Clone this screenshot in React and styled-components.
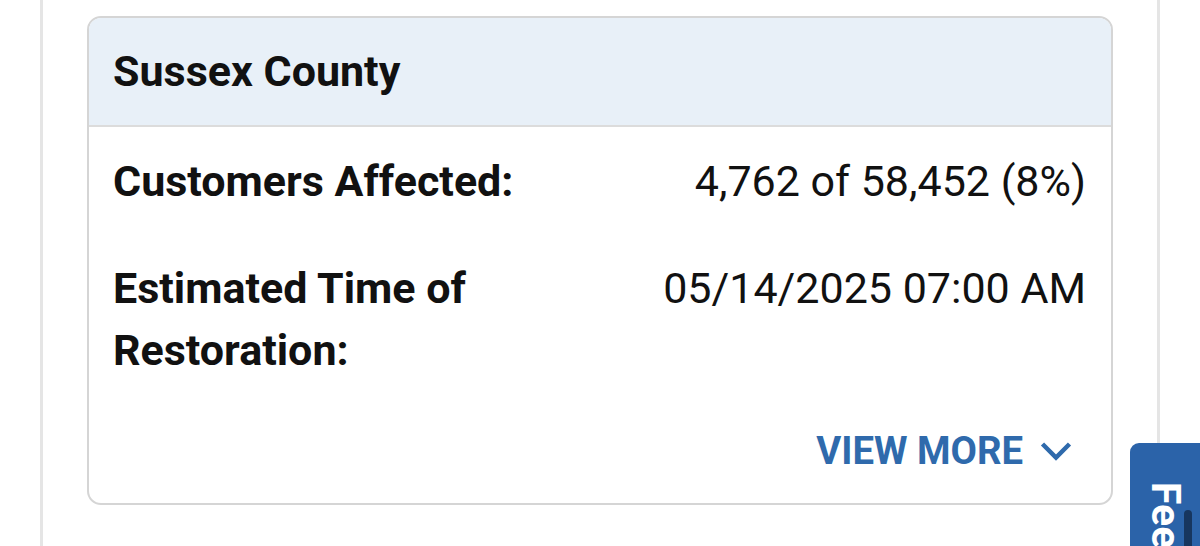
import styled, { createGlobalStyle } from "styled-components";

const GlobalStyle = createGlobalStyle`
  html, body {
    margin: 0;
    padding: 0;
    height: 546px;
    overflow: hidden;
    background: #fff;
    font-family: Roboto, "Liberation Sans", Arial, sans-serif;
    color: #111;
  }
`;

const Column = styled.div`
  margin-left: 40px;
  width: 1120px;
  height: 546px;
  border-left: 3px solid #e5e5e5;
  border-right: 3px solid #e5e5e5;
  padding: 16px 44px 0;
  box-sizing: border-box;
`;

const Card = styled.section`
  border: 2px solid #d5d5d5;
  border-radius: 14px;
  overflow: hidden;
  background: #fff;
`;

const CardHeader = styled.header`
  display: flex;
  align-items: center;
  height: 107px;
  padding: 0 24px;
  background: #e8f0f8;
  border-bottom: 2px solid #dcdcdc;
`;

const Title = styled.h2`
  margin: 0;
  font-size: 43px;
  font-weight: 700;
  line-height: 1;
`;

const CardBody = styled.div`
  padding: 0 25px 0 24px;
`;

const Row = styled.div`
  display: grid;
  grid-template-columns: 1fr 1fr;
  padding: 23px 0 22px;
  font-size: 43px;
  line-height: 62px;
`;

const Label = styled.div`
  font-weight: 700;
  padding-right: 60px;
`;

const Value = styled.div`
  font-weight: 400;
  text-align: right;
`;

const Footer = styled.div`
  display: flex;
  justify-content: flex-end;
  align-items: center;
  padding: 26px 39px 30px 24px;
`;

const MoreButton = styled.button`
  display: flex;
  align-items: center;
  gap: 17px;
  border: 0;
  background: none;
  padding: 0;
  font-family: inherit;
  font-size: 38.3px;
  line-height: 44px;
  font-weight: 700;
  color: #2f6aac;
  text-transform: uppercase;
  cursor: pointer;
`;

const FeedbackTab = styled.div`
  position: fixed;
  right: 0;
  top: 443px;
  width: 70px;
  height: 140px;
  background: #2b63a9;
  border-top-left-radius: 9px;
  box-sizing: border-box;
  padding: 39px 0 0 18px;
  overflow: hidden;
`;

const FeedbackText = styled.span`
  display: block;
  writing-mode: vertical-rl;
  color: #fff;
  font-size: 41px;
  font-weight: 700;
  line-height: 36px;
`;

const TabShade = styled.div`
  position: absolute;
  left: 54px;
  top: 67px;
  width: 8px;
  height: 80px;
  border-radius: 4px;
  background: #17365f;
`;

const rows = [
  { label: "Customers Affected:", value: "4,762 of 58,452 (8%)" },
  { label: "Estimated Time of Restoration:", value: "05/14/2025 07:00 AM" },
];

const Chevron = () => (
  <svg width="32" height="20" viewBox="0 0 32 20" aria-hidden="true">
    <polyline
      points="2.5,3 16,16.5 29.5,3"
      fill="none"
      stroke="#2f6aac"
      strokeWidth="4.5"
    />
  </svg>
);

const App = () => (
  <>
    <GlobalStyle />
    <Column>
      <Card>
        <CardHeader>
          <Title>Sussex County</Title>
        </CardHeader>
        <CardBody>
          {rows.map((row) => (
            <Row key={row.label}>
              <Label>{row.label}</Label>
              <Value>{row.value}</Value>
            </Row>
          ))}
        </CardBody>
        <Footer>
          <MoreButton>
            View More
            <Chevron />
          </MoreButton>
        </Footer>
      </Card>
    </Column>
    <FeedbackTab>
      <FeedbackText>Feedback</FeedbackText>
      <TabShade />
    </FeedbackTab>
  </>
);

export default App;
